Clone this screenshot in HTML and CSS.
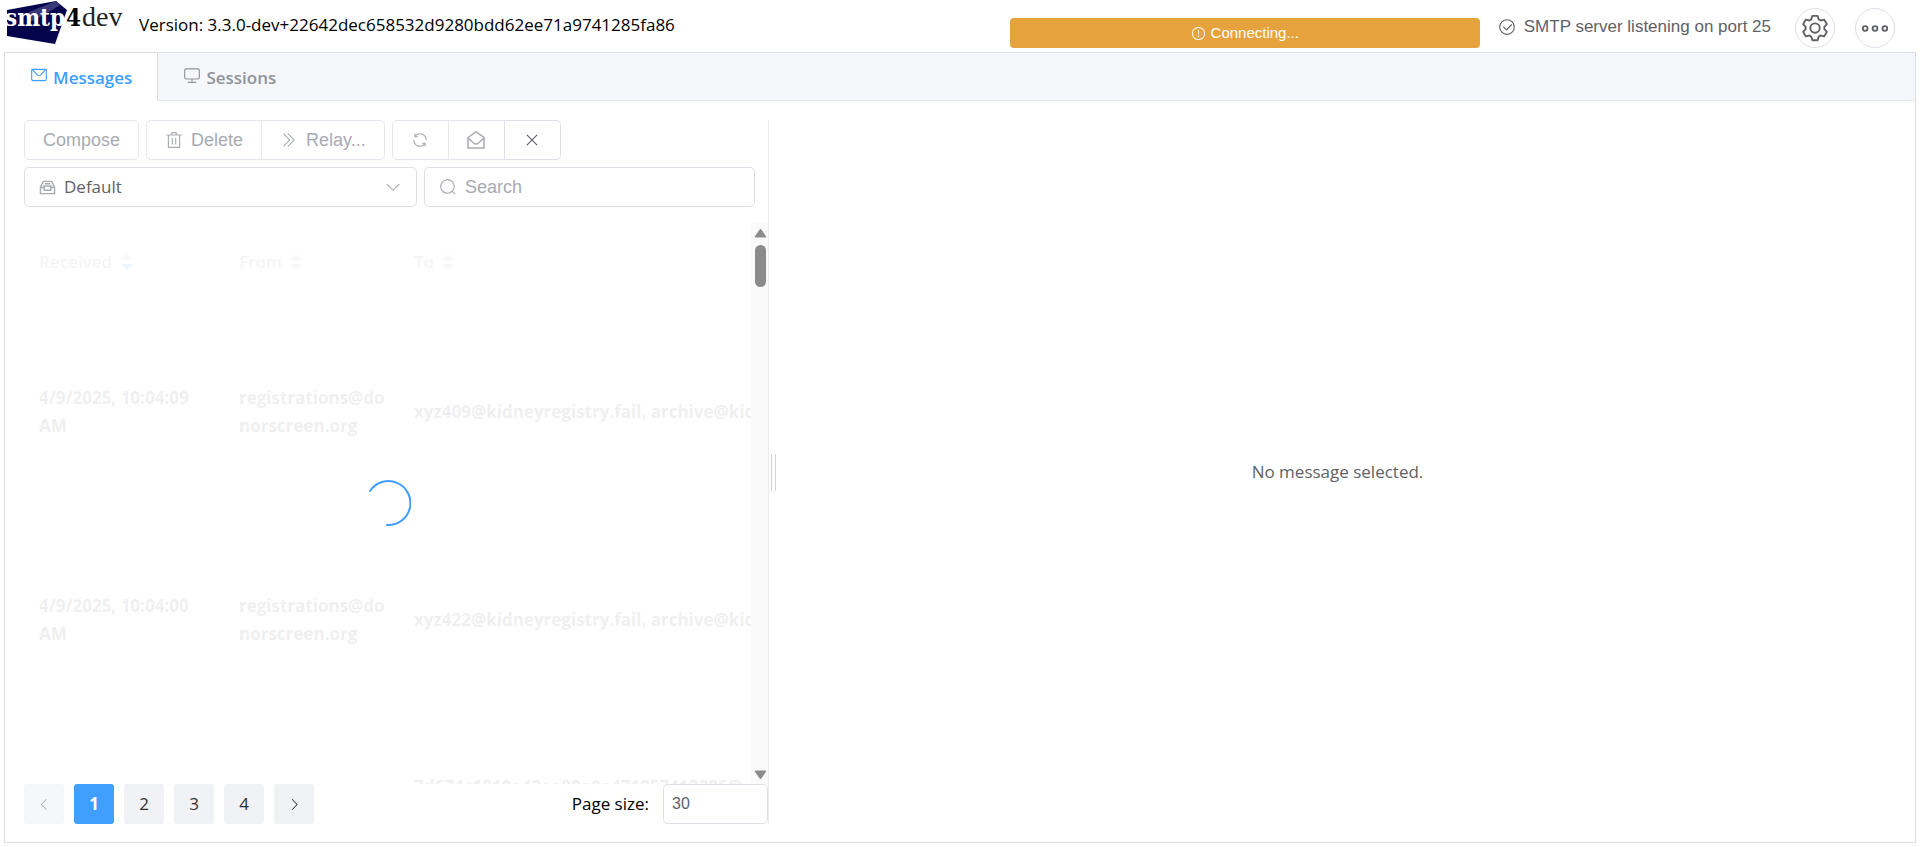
FILE: index.html
```html
<!DOCTYPE html>
<html lang="en">
<head>
<meta charset="utf-8">
<title>smtp4dev</title>
<link rel="stylesheet" href="styles.css">
</head>
<body>
<header class="header">
  <svg class="logo" viewBox="0 0 126 46" role="img" aria-label="smtp4dev">
    <polygon points="3,10 52,1 63,10 51,44 3,36" fill="#04044c"/>
    <polygon points="25,12 52,1 56,5 40,15 26,22" fill="#3a3a78"/>
    <text class="logo-smtp" x="1" y="26">smtp</text>
    <text class="logo-four" x="62" y="26">4</text>
    <text class="logo-dev" x="78" y="26">dev</text>
  </svg>
  <span class="version">Version: 3.3.0-dev+22642dec658532d9280bdd62ee71a9741285fa86</span>
  <button class="connecting" type="button">
    <svg class="icon icon-small" viewBox="0 0 1024 1024"><path d="M512 64a448 448 0 1 1 0 896 448 448 0 0 1 0-896m0 832a384 384 0 0 0 0-768 384 384 0 0 0 0 768m48-176a48 48 0 1 1-96 0 48 48 0 0 1 96 0m-48-464a32 32 0 0 1 32 32v288a32 32 0 0 1-64 0V288a32 32 0 0 1 32-32"/></svg>
    Connecting...
  </button>
  <button class="status" type="button">
    <svg class="icon" viewBox="0 0 1024 1024"><path d="M512 896a384 384 0 1 0 0-768 384 384 0 0 0 0 768m0 64a448 448 0 1 1 0-896 448 448 0 0 1 0 896"/><path d="M745.344 361.344a32 32 0 0 1 45.312 45.312l-288 288a32 32 0 0 1-45.312 0l-160-160a32 32 0 1 1 45.312-45.312L480 626.752z"/></svg>
    SMTP server listening on port 25
  </button>
  <div class="header-actions">
    <button class="circle" type="button" aria-label="Settings">
      <svg class="icon icon-large" viewBox="0 0 1024 1024"><path d="M600.704 64a32 32 0 0 1 30.464 22.208l35.2 109.376c14.784 7.232 28.928 15.36 42.432 24.512l112.384-24.192a32 32 0 0 1 34.432 15.36L944.32 364.8a32 32 0 0 1-4.032 37.504l-77.12 85.12a357.12 357.12 0 0 1 0 49.024l77.12 85.248a32 32 0 0 1 4.032 37.504l-88.704 153.6a32 32 0 0 1-34.432 15.296L708.8 803.904c-13.44 9.088-27.648 17.28-42.368 24.512l-35.264 109.376A32 32 0 0 1 600.704 960H423.296a32 32 0 0 1-30.464-22.208L357.696 828.48a351.616 351.616 0 0 1-42.56-24.64l-112.32 24.256a32 32 0 0 1-34.432-15.36L79.68 659.2a32 32 0 0 1 4.032-37.504l77.12-85.248a357.12 357.12 0 0 1 0-48.896l-77.12-85.248A32 32 0 0 1 79.68 364.8l88.704-153.6a32 32 0 0 1 34.432-15.296l112.32 24.256c13.568-9.152 27.776-17.408 42.56-24.64l35.2-109.312A32 32 0 0 1 423.232 64H600.64zm-23.424 64H446.72l-36.352 113.088-24.512 11.968a294.113 294.113 0 0 0-34.816 20.096l-22.656 15.36-116.224-25.088-65.28 113.152 79.68 88.192-1.92 27.136a293.12 293.12 0 0 0 0 40.192l1.92 27.136-79.808 88.192 65.344 113.152 116.224-25.024 22.656 15.296a294.113 294.113 0 0 0 34.816 20.096l24.512 11.968L446.72 896h130.688l36.48-113.152 24.448-11.904a288.282 288.282 0 0 0 34.752-20.096l22.592-15.296 116.288 25.024 65.28-113.152-79.744-88.192 1.92-27.136a293.12 293.12 0 0 0 0-40.256l-1.92-27.136 79.808-88.128-65.344-113.152-116.288 24.96-22.592-15.232a287.616 287.616 0 0 0-34.752-20.096l-24.448-11.904L577.344 128zM512 320a192 192 0 1 1 0 384 192 192 0 0 1 0-384m0 64a128 128 0 1 0 0 256 128 128 0 0 0 0-256"/></svg>
    </button>
    <button class="circle" type="button" aria-label="More">
      <svg class="icon icon-large" viewBox="0 0 1024 1024"><path d="M176 416a112 112 0 1 0 0 224 112 112 0 0 0 0-224m0 64a48 48 0 1 1 0 96 48 48 0 0 1 0-96m336-64a112 112 0 1 1 0 224 112 112 0 0 1 0-224m0 64a48 48 0 1 0 0 96 48 48 0 0 0 0-96m336-64a112 112 0 1 1 0 224 112 112 0 0 1 0-224m0 64a48 48 0 1 0 0 96 48 48 0 0 0 0-96"/></svg>
    </button>
  </div>
</header>

<main class="card">
  <nav class="tabs" role="tablist">
    <button class="tab tab-active" type="button" role="tab" aria-selected="true">
      <svg class="icon" viewBox="0 0 1024 1024"><path d="M128 224v512a64 64 0 0 0 64 64h640a64 64 0 0 0 64-64V224zm0-64h768a64 64 0 0 1 64 64v512a128 128 0 0 1-128 128H192A128 128 0 0 1 64 736V224a64 64 0 0 1 64-64"/><path d="M904 224 656.512 506.88a192 192 0 0 1-289.024 0L120 224zm-698.944 0 210.56 240.704a128 128 0 0 0 192.704 0L818.944 224z"/></svg>
      <span>Messages</span>
    </button>
    <button class="tab" type="button" role="tab" aria-selected="false">
      <svg class="icon" viewBox="0 0 1024 1024"><path d="M544 768v128h192a32 32 0 1 1 0 64H288a32 32 0 1 1 0-64h192V768H192A128 128 0 0 1 64 640V256a128 128 0 0 1 128-128h640a128 128 0 0 1 128 128v384a128 128 0 0 1-128 128zM192 192a64 64 0 0 0-64 64v384a64 64 0 0 0 64 64h640a64 64 0 0 0 64-64V256a64 64 0 0 0-64-64z"/></svg>
      <span>Sessions</span>
    </button>
  </nav>

  <div class="panes">
    <section class="list-pane">
      <div class="toolbar">
        <div class="group">
          <button class="btn" type="button" disabled>Compose</button>
        </div>
        <div class="group">
          <button class="btn" type="button" disabled>
            <svg class="icon" viewBox="0 0 1024 1024"><path d="M160 256H96a32 32 0 0 1 0-64h256V95.936a32 32 0 0 1 32-32h256a32 32 0 0 1 32 32V192h256a32 32 0 1 1 0 64h-64v672a32 32 0 0 1-32 32H192a32 32 0 0 1-32-32zm448-64v-64H416v64zM224 896h576V256H224zm192-128a32 32 0 0 1-32-32V416a32 32 0 0 1 64 0v320a32 32 0 0 1-32 32m192 0a32 32 0 0 1-32-32V416a32 32 0 0 1 64 0v320a32 32 0 0 1-32 32"/></svg>
            Delete
          </button>
          <button class="btn" type="button" disabled>
            <svg class="icon" viewBox="0 0 1024 1024"><path d="M452.864 149.312a29.12 29.12 0 0 1 41.728.064L826.24 489.664a32 32 0 0 1 0 44.672L494.592 874.624a29.12 29.12 0 0 1-41.728 0 30.592 30.592 0 0 1 0-42.752L764.736 512 452.864 192a30.592 30.592 0 0 1 0-42.688m-256 0a29.12 29.12 0 0 1 41.728.064L570.24 489.664a32 32 0 0 1 0 44.672L238.592 874.624a29.12 29.12 0 0 1-41.728 0 30.592 30.592 0 0 1 0-42.752L508.736 512 196.864 192a30.592 30.592 0 0 1 0-42.688"/></svg>
            Relay...
          </button>
        </div>
        <div class="group">
          <button class="btn btn-icon" type="button" disabled aria-label="Refresh">
            <svg class="icon" viewBox="0 0 1024 1024"><path d="M771.776 794.88A384 384 0 0 1 128 512h64a320 320 0 0 0 555.712 216.448H654.72a32 32 0 1 1 0-64h149.056a32 32 0 0 1 32 32v148.928a32 32 0 1 1-64 0v-50.56zM276.288 295.616h92.992a32 32 0 0 1 0 64H220.16a32 32 0 0 1-32-32V178.56a32 32 0 0 1 64 0v50.56A384 384 0 0 1 896.128 512h-64a320 320 0 0 0-555.776-216.384z"/></svg>
          </button>
          <button class="btn btn-icon" type="button" disabled aria-label="Mark all as read">
            <svg class="icon icon-line" viewBox="0 0 18 18"><path d="M1 6.500 9 1l8 5.500V17H1zM1 7l5.500 5q2.500 2 5 0L17 7"/></svg>
          </button>
          <button class="btn btn-icon btn-enabled" type="button" aria-label="Clear">
            <svg class="icon" viewBox="0 0 1024 1024"><path d="M764.288 214.592 512 466.88 259.712 214.592a31.936 31.936 0 0 0-45.12 45.12L466.752 512 214.528 764.224a31.936 31.936 0 1 0 45.12 45.184L512 557.184l252.288 252.288a31.936 31.936 0 0 0 45.12-45.12L557.12 512.064l252.288-252.352a31.936 31.936 0 1 0-45.12-45.184z"/></svg>
          </button>
        </div>
      </div>

      <div class="filters">
        <div class="field field-mailbox">
          <svg class="icon icon-line icon-tray" viewBox="0 0 18 18"><path d="M1.500 9.500V16H16.500V9.500L13.500 3H4.500zM1.500 9.500H5.500V12.500H12.500V9.500H16.500M6 5.500H12M4.500 8H13.500"/></svg>
          <select class="select" aria-label="Mailbox"><option>Default</option></select>
          <svg class="icon" viewBox="0 0 1024 1024"><path d="M831.872 340.864 512 652.672 192.128 340.864a30.592 30.592 0 0 0-42.752 0 29.120 29.120 0 0 0 0 41.600L489.664 714.240a32 32 0 0 0 44.672 0l340.288-331.712a29.120 29.120 0 0 0 0-41.728 30.592 30.592 0 0 0-42.752 0z"/></svg>
        </div>
        <div class="field field-search">
          <svg class="icon" viewBox="0 0 1024 1024"><path d="m795.904 750.720 124.992 124.928a32 32 0 0 1-45.248 45.248L750.656 795.904a416 416 0 1 1 45.248-45.248zM480 832a352 352 0 1 0 0-704 352 352 0 0 0 0 704"/></svg>
          <input class="search" type="text" placeholder="Search" aria-label="Search">
        </div>
      </div>

      <div class="table-area">
        <div class="table-view">
          <table class="messages">
            <colgroup><col class="col-received"><col class="col-from"><col class="col-to"></colgroup>
            <thead>
              <tr>
                <th>Received <svg class="sort sort-desc" viewBox="0 0 12 16"><path d="M0 6 6 0l6 6z"/><path class="down" d="M0 10h12l-6 6z"/></svg></th>
                <th>From <svg class="sort" viewBox="0 0 12 16"><path d="M0 6 6 0l6 6z"/><path d="M0 10h12l-6 6z"/></svg></th>
                <th>To <svg class="sort" viewBox="0 0 12 16"><path d="M0 6 6 0l6 6z"/><path d="M0 10h12l-6 6z"/></svg></th>
              </tr>
            </thead>
            <tbody>
              <tr class="row-tall"><td>4/9/2025, 10:04:09 AM</td><td class="from">registrations@donorscreen.org</td><td class="to">xyz409@kidneyregistry.fail, archive@kidneyregistry.fail</td></tr>
              <tr class="row-mid"><td>4/9/2025, 10:04:00 AM</td><td class="from">registrations@donorscreen.org</td><td class="to">xyz422@kidneyregistry.fail, archive@kidneyregistry.fail</td></tr>
              <tr class="row-last"><td></td><td></td><td class="to">7d674c1810a42ea80a0a471857412286@</td></tr>
            </tbody>
          </table>
          <div class="mask">
            <svg class="spinner" viewBox="0 0 46 46"><path d="M5 11A22 22 0 1 1 22 45"/></svg>
          </div>
        </div>
        <div class="scrollbar">
          <svg class="arrow" viewBox="0 0 13 10"><path d="M6.500 1 12 9H1z"/></svg>
          <div class="thumb"></div>
          <svg class="arrow arrow-down" viewBox="0 0 13 10"><path d="M1 1h11L6.500 9z"/></svg>
        </div>
      </div>

      <footer class="pager">
        <button class="page" type="button" disabled aria-label="Previous page">
          <svg class="icon icon-small" viewBox="0 0 1024 1024"><path d="M609.408 149.376 277.760 489.600a32 32 0 0 0 0 44.672l331.648 340.352a29.120 29.120 0 0 0 41.728 0 30.592 30.592 0 0 0 0-42.752L339.264 511.936l311.872-319.872a30.592 30.592 0 0 0 0-42.688 29.120 29.120 0 0 0-41.728 0"/></svg>
        </button>
        <button class="page page-current" type="button">1</button>
        <button class="page" type="button">2</button>
        <button class="page" type="button">3</button>
        <button class="page" type="button">4</button>
        <button class="page" type="button" aria-label="Next page">
          <svg class="icon icon-small" viewBox="0 0 1024 1024"><path d="M340.864 149.312a30.592 30.592 0 0 0 0 42.752L652.736 512 340.864 831.872a30.592 30.592 0 0 0 0 42.752 29.120 29.120 0 0 0 41.728 0L714.240 534.336a32 32 0 0 0 0-44.672L382.592 149.376a29.120 29.120 0 0 0-41.728 0z"/></svg>
        </button>
        <label class="size-label" for="page-size">Page size:</label>
        <input class="size-input" id="page-size" type="text" value="30">
      </footer>
    </section>

    <div class="splitter"></div>
    <section class="detail-pane">No message selected.</section>
  </div>
</main>
</body>
</html>
```
FILE: styles.css
```css
* {
  box-sizing: border-box;
}

body {
  display: flex;
  flex-direction: column;
  min-height: 100vh;
  margin: 0;
  padding: 0 4px 4px;
  background: #fff;
  color: #000;
  font: 17px/28px "Open Sans", "Noto Sans", sans-serif;
}

button,
input {
  margin: 0;
  font: 18px/20px "Liberation Sans", Arial, sans-serif;
}

button {
  display: flex;
  align-items: center;
  justify-content: center;
}

.icon {
  flex: none;
  width: 18px;
  height: 18px;
  fill: currentColor;
}

.icon-small {
  width: 15px;
  height: 15px;
}

.icon-large {
  width: 30px;
  height: 30px;
}

.icon-line {
  fill: none;
  stroke: currentColor;
  stroke-width: 1.5;
}

.icon-tray {
  width: 17px;
}

.header {
  display: flex;
  align-items: flex-start;
  height: 52px;
  padding-right: 21px;
}

.logo {
  flex: none;
  width: 126px;
  height: 46px;
  margin-right: 9px;
}

.logo-smtp,
.logo-four {
  font: bold 24px "DejaVu Serif Condensed", "DejaVu Serif", serif;
}

.logo-smtp {
  fill: #fff;
}

.logo-dev {
  fill: #222;
  font: 28px "Liberation Serif", serif;
}

.version {
  padding-top: 11px;
  white-space: nowrap;
}

.connecting {
  flex: none;
  gap: 5px;
  width: 470px;
  height: 30px;
  margin: 18px 18px 0 auto;
  border: 0;
  border-radius: 4px;
  background: #e6a23c;
  color: #fff;
  font-size: 15px;
}

.status {
  flex: none;
  gap: 8px;
  height: 40px;
  margin: 7px 24px 0 0;
  padding: 0;
  border: 0;
  background: none;
  color: #606266;
  font-size: 17px;
}

.header-actions {
  display: flex;
  gap: 20px;
  padding-top: 8px;
}

.circle {
  width: 40px;
  height: 40px;
  padding: 0;
  border: 1px solid #dcdfe6;
  border-radius: 50%;
  background: #fff;
  color: #606266;
}

.card {
  display: flex;
  flex: 1;
  flex-direction: column;
  border: 1px solid #dcdfe6;
}

.tabs {
  display: flex;
  height: 48px;
  border-bottom: 1px solid #e4e7ed;
  background: #f5f7fa;
}

.tab {
  gap: 5px;
  height: 48px;
  padding: 2px 25px 0;
  border: 0;
  background: none;
  color: #909399;
  font: 600 17px/28px "Open Sans", "Noto Sans", sans-serif;
}

.tab .icon {
  margin-bottom: 6px;
}

.tab-active {
  border-right: 1px solid #dcdfe6;
  background: #fff;
  color: #409eff;
}

.panes {
  display: flex;
  flex: 1;
  padding: 19px 19px 18px;
}

.list-pane {
  display: flex;
  flex: 0 0 745px;
  flex-direction: column;
  min-width: 0;
  border-right: 1px solid #ebebeb;
}

.toolbar {
  display: flex;
  gap: 7px;
}

.group {
  display: flex;
}

.btn {
  gap: 8px;
  height: 40px;
  padding: 0 18px;
  border: 1px solid #e4e7ed;
  background: #fff;
  color: #a8abb2;
}

.btn:first-child {
  border-radius: 5px 0 0 5px;
}

.btn:last-child {
  border-radius: 0 5px 5px 0;
}

.btn:only-child {
  border-radius: 5px;
}

.btn + .btn {
  margin-left: -1px;
}

.btn-icon {
  width: 57px;
  padding: 0;
}

.btn-enabled {
  border-color: #dcdfe6;
  color: #606266;
}

.filters {
  display: flex;
  gap: 7px;
  padding: 7px 13px 15px 0;
}

.field {
  display: flex;
  align-items: center;
  gap: 8px;
  min-width: 0;
  height: 40px;
  padding: 0 14px;
  border: 1px solid #dcdfe6;
  border-radius: 5px;
  color: #a8abb2;
}

.field-mailbox {
  flex: 1 1 393px;
}

.field-search {
  flex: 1 1 331px;
}

.select {
  flex: 1;
  min-width: 0;
  padding: 0;
  border: 0;
  background: none;
  color: #606266;
  font: 17px/28px "Open Sans", "Noto Sans", sans-serif;
  appearance: none;
}

.search {
  flex: 1;
  min-width: 0;
  padding: 0;
  border: 0;
  background: none;
  color: #606266;
}

.search::placeholder {
  color: #a8abb2;
}

.table-area {
  display: flex;
  flex: 1 1 0;
  min-height: 0;
}

.table-view {
  position: relative;
  flex: 1;
  min-width: 0;
  overflow: hidden;
}

.messages {
  position: absolute;
  top: 0;
  left: 0;
  width: 100%;
  border-collapse: collapse;
  table-layout: fixed;
}

.col-received {
  width: 200px;
}

.col-from {
  width: 175px;
}

.messages th,
.messages td {
  padding: 0 15px;
  border-bottom: 1px solid #ebeef5;
  text-align: left;
  overflow-wrap: anywhere;
}

.messages th {
  height: 79px;
  padding-top: 2px;
  color: #909399;
  font-weight: 600;
}

.messages td {
  color: #606266;
  font-weight: 700;
}

.messages .from {
  padding-right: 10px;
}

.messages .to {
  padding-right: 0;
  overflow: hidden;
  overflow-wrap: normal;
  white-space: nowrap;
}

.row-tall {
  height: 222px;
}

.row-mid {
  height: 194px;
}

.row-last {
  height: 140px;
}

.sort {
  width: 12px;
  height: 16px;
  margin-left: 4px;
  fill: #a8abb2;
  vertical-align: -2px;
}

.sort-desc .down {
  fill: #409eff;
}

.mask {
  position: absolute;
  inset: 0;
  display: flex;
  align-items: center;
  justify-content: center;
  background: rgba(255, 255, 255, 0.9);
}

.spinner {
  width: 46px;
  height: 46px;
  fill: none;
  stroke: #409eff;
  stroke-width: 2;
  stroke-linecap: round;
}

.scrollbar {
  display: flex;
  flex: 0 0 17px;
  flex-direction: column;
  align-items: center;
  padding: 6px 0 4px 1px;
  background: #fafafa;
}

.arrow {
  width: 13px;
  height: 10px;
  fill: #8b8b8b;
  stroke: #8b8b8b;
  stroke-linejoin: round;
}

.thumb {
  width: 11px;
  height: 42px;
  margin-top: 7px;
  border-radius: 6px;
  background: #8b8b8b;
}

.arrow-down {
  margin-top: auto;
}

.pager {
  display: flex;
  align-items: center;
  gap: 10px;
}

.page {
  width: 40px;
  height: 40px;
  padding: 0;
  border: 0;
  border-radius: 3px;
  background: #f0f2f5;
  color: #303133;
  font: 17px/28px "Open Sans", "Noto Sans", sans-serif;
}

.page:disabled {
  background: #f5f7fa;
  color: #a8abb2;
}

.page-current {
  background: #409eff;
  color: #fff;
  font-weight: 700;
}

.size-label {
  margin: 0 4px 0 auto;
}

.size-input {
  width: 105px;
  height: 40px;
  padding: 0 8px;
  border: 1px solid #dcdfe6;
  border-radius: 5px;
  background: #fff;
  color: #606266;
  font-size: 16px;
}

.splitter {
  align-self: center;
  width: 5px;
  height: 37px;
  margin: 0 3px 0 2px;
  border: solid #d4d4d4;
  border-width: 0 1px;
}

.detail-pane {
  display: flex;
  flex: 1;
  align-items: center;
  justify-content: center;
  color: #606266;
}
```
